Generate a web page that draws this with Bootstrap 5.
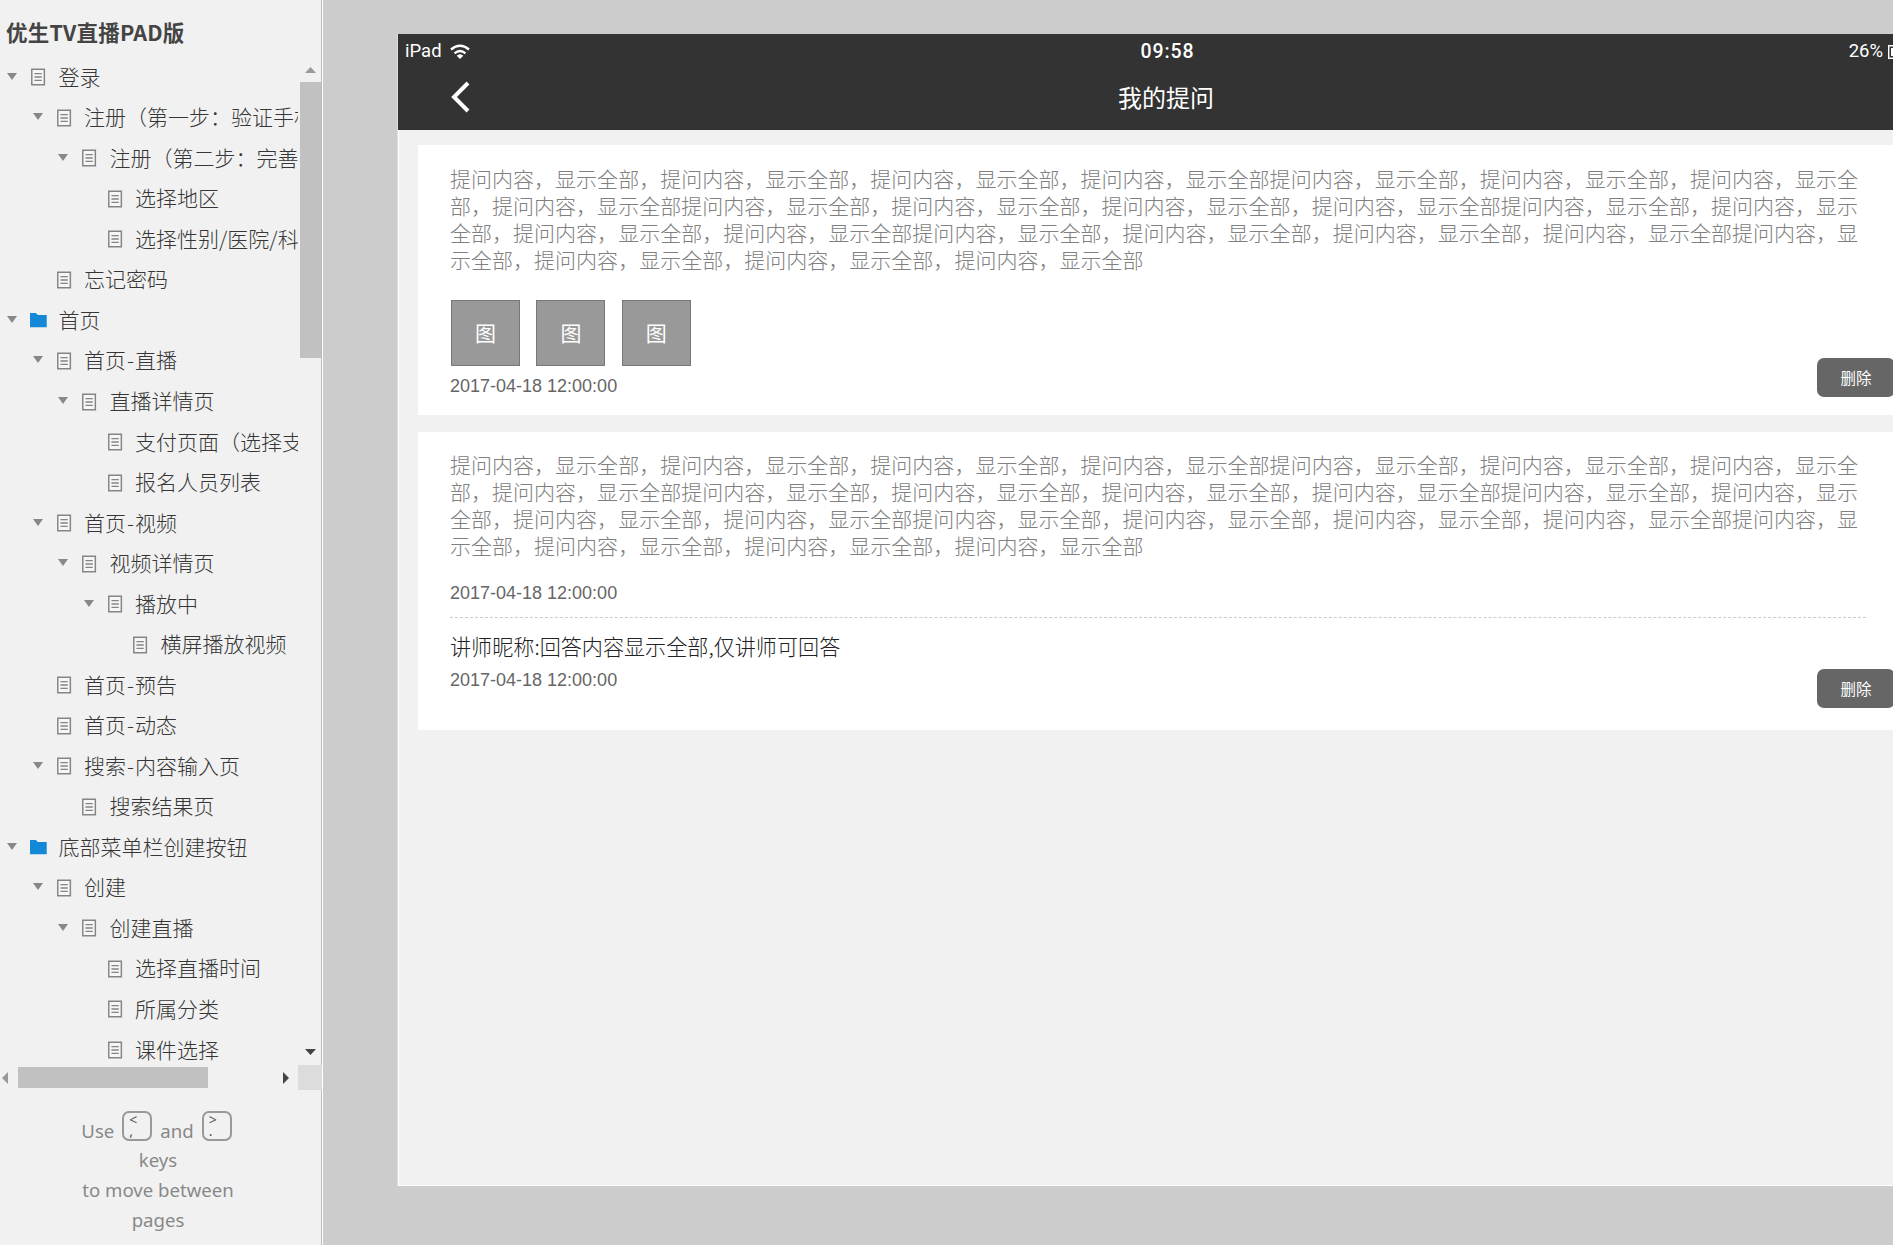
<!DOCTYPE html>
<html lang="zh-CN">
<head>
<meta charset="utf-8">
<title>优生TV直播PAD版</title>
<link rel="stylesheet" href="https://cdn.jsdelivr.net/npm/bootstrap@5.3.0/dist/css/bootstrap.min.css">
<style>
body{background:#ccc;font-family:"Noto Sans CJK SC",sans-serif;color:#444}
symbol{overflow:visible}
.side{width:323px;background:#f1f1f1;border-right:1px solid #fff;box-shadow:inset -1px 0 #bbb}
.site-title{height:57px;padding:2px 0 0 6px;font-size:21.500px;font-weight:700;line-height:60px;letter-spacing:.2px}
.tree-area{height:1008px}
.tree{width:298px;padding:0;color:#363636}
.node{height:40.54px;font-size:21px;font-weight:300;line-height:40px;padding-left:calc(7.1px + var(--lv)*25.5px)}
.node span{margin-top:-3px}
.node b{font-weight:300;margin:0 1px}
.lv0{--lv:0}.lv1{--lv:1}.lv2{--lv:2}.lv3{--lv:3}.lv4{--lv:4}
.arrow{width:24px;flex:none;height:7px;margin-top:-2px}
.arrow.open::before{content:"";display:block;width:0;border:5.500px solid transparent;border-top:7px solid #888;border-bottom:0}
.ic{width:27.500px;height:18px;flex:none;display:block;overflow:visible}
.vbar{width:21px;margin-left:2px;padding-top:10px}
.vthumb{height:276px;background:#c1c1c1;margin-top:9px;width:21px}
.vdown{margin-bottom:10px}
.hbar{height:25px}
.hthumb{width:190px;height:21px;background:#c1c1c1;margin-left:10px}
.corner{width:24px;height:25px;background:#dcdcdc}
.hint{color:#888;font:18.6px/30px "Noto Sans",sans-serif;padding-right:6px;padding-top:18px}
.hint-keys{height:37px;padding-right:3px}
.hint-keys .word{padding-top:8px}
.keycap{width:30px;height:30px;border:2px solid #999;border-radius:7px;color:#555;font:14px/12.500px "Noto Sans",sans-serif;padding:1px 0 0 5px;margin-top:3px}
.keycap .low{margin-top:-2px}
.pad{width:1536px;height:1152px;margin:34px 0 0 75px;background:#f1f1f1;box-shadow:-1px 0 #ddd,inset 1px -1px #fff}
.top{height:96px;background:#333;color:#fff;font-family:Roboto,sans-serif}
.statusbar{height:34px;font-size:18.5px;padding:1px 0 0 7px}
.wifi{margin-left:7px}
.clock{font-weight:500;font-size:19.5px;letter-spacing:.9px}
.titlebar{padding-top:12px}
.page-title{font:400 24px/34px "Noto Sans CJK SC",sans-serif}
.back{margin-left:52px;width:20px}
.cards{margin:14px 0 0 20px;border-top:1px solid transparent}
.q{background:#fff;padding:20px 0 0 32px;width:1510px}
.q1{height:270px;margin-bottom:17px}
.q2{height:298px;padding-top:19px}
.qt{width:1420px;font-size:21.020px;line-height:27px;font-weight:300;color:#808080;margin:0}
.thumbs{padding-left:1px;margin-top:27px;gap:16.400px}
.thumb{width:69px;height:66px;background:#999;border:1px solid #777;color:#fff;font-size:21px;line-height:62px;text-align:center}
.when{font:18px/21px "Liberation Sans",sans-serif;color:#666}
.del{width:78px;height:39px;border-radius:7px;background:#666;color:#fff;font-size:15.500px;line-height:37px;padding:0 0 1px;border:0;display:block;margin-left:1367px}
.rule{border-top:1px dashed #ccc;width:1416px;margin-top:13px}
.ans{font-size:21.100px;font-weight:300;line-height:30px;color:#222;margin-top:13px}
.q1 .when{margin-top:10px}
.q1 .del{margin-top:-39px}
.q2 .first{margin-top:24px}
.q2 .ans+.when{margin-top:9px}
.q2 .del{margin-top:-22px}
</style>
<script src="https://cdn.jsdelivr.net/npm/bootstrap@5.3.0/dist/js/bootstrap.bundle.min.js"></script>
</head>
<body class="vh-100 overflow-hidden">
<svg class="d-none">
<symbol id="doc" viewBox="0 0 28 18"><path d="M.8 1.200h12.800v15.700H.8z" fill="#f6f6f6" stroke="#858585" stroke-width="1.500"/><path d="M3.500 5.500h7.500M3.500 9h7.500M3.500 12.500h7.500" stroke="#858585" stroke-width="1.300"/></symbol>
<symbol id="dir" viewBox="0 0 28 18"><path d="M-1 2h6l2 2h9v12.300H-1z" fill="#1488d8"/></symbol>
</svg>
<div class="d-flex vh-100">
<aside class="side flex-shrink-0 d-flex flex-column">
<div class="site-title text-nowrap">优生TV直播PAD版</div>
<div class="tree-area d-flex overflow-hidden flex-shrink-0">
<div class="tree overflow-hidden text-nowrap" id="tree">
<div class="node lv0 d-flex align-items-center"><i class="arrow open"></i><svg class="ic"><use href="#doc"/></svg><span>登录</span></div>
<div class="node lv1 d-flex align-items-center"><i class="arrow open"></i><svg class="ic"><use href="#doc"/></svg><span>注册（第一步：验证手机）</span></div>
<div class="node lv2 d-flex align-items-center"><i class="arrow open"></i><svg class="ic"><use href="#doc"/></svg><span>注册（第二步：完善</span></div>
<div class="node lv3 d-flex align-items-center"><i class="arrow"></i><svg class="ic"><use href="#doc"/></svg><span>选择地区</span></div>
<div class="node lv3 d-flex align-items-center"><i class="arrow"></i><svg class="ic"><use href="#doc"/></svg><span>选择性别/医院/科</span></div>
<div class="node lv1 d-flex align-items-center"><i class="arrow"></i><svg class="ic"><use href="#doc"/></svg><span>忘记密码</span></div>
<div class="node lv0 d-flex align-items-center"><i class="arrow open"></i><svg class="ic"><use href="#dir"/></svg><span>首页</span></div>
<div class="node lv1 d-flex align-items-center"><i class="arrow open"></i><svg class="ic"><use href="#doc"/></svg><span>首页<b>-</b>直播</span></div>
<div class="node lv2 d-flex align-items-center"><i class="arrow open"></i><svg class="ic"><use href="#doc"/></svg><span>直播详情页</span></div>
<div class="node lv3 d-flex align-items-center"><i class="arrow"></i><svg class="ic"><use href="#doc"/></svg><span>支付页面（选择支</span></div>
<div class="node lv3 d-flex align-items-center"><i class="arrow"></i><svg class="ic"><use href="#doc"/></svg><span>报名人员列表</span></div>
<div class="node lv1 d-flex align-items-center"><i class="arrow open"></i><svg class="ic"><use href="#doc"/></svg><span>首页<b>-</b>视频</span></div>
<div class="node lv2 d-flex align-items-center"><i class="arrow open"></i><svg class="ic"><use href="#doc"/></svg><span>视频详情页</span></div>
<div class="node lv3 d-flex align-items-center"><i class="arrow open"></i><svg class="ic"><use href="#doc"/></svg><span>播放中</span></div>
<div class="node lv4 d-flex align-items-center"><i class="arrow"></i><svg class="ic"><use href="#doc"/></svg><span>横屏播放视频</span></div>
<div class="node lv1 d-flex align-items-center"><i class="arrow"></i><svg class="ic"><use href="#doc"/></svg><span>首页<b>-</b>预告</span></div>
<div class="node lv1 d-flex align-items-center"><i class="arrow"></i><svg class="ic"><use href="#doc"/></svg><span>首页<b>-</b>动态</span></div>
<div class="node lv1 d-flex align-items-center"><i class="arrow open"></i><svg class="ic"><use href="#doc"/></svg><span>搜索<b>-</b>内容输入页</span></div>
<div class="node lv2 d-flex align-items-center"><i class="arrow"></i><svg class="ic"><use href="#doc"/></svg><span>搜索结果页</span></div>
<div class="node lv0 d-flex align-items-center"><i class="arrow open"></i><svg class="ic"><use href="#dir"/></svg><span>底部菜单栏创建按钮</span></div>
<div class="node lv1 d-flex align-items-center"><i class="arrow open"></i><svg class="ic"><use href="#doc"/></svg><span>创建</span></div>
<div class="node lv2 d-flex align-items-center"><i class="arrow open"></i><svg class="ic"><use href="#doc"/></svg><span>创建直播</span></div>
<div class="node lv3 d-flex align-items-center"><i class="arrow"></i><svg class="ic"><use href="#doc"/></svg><span>选择直播时间</span></div>
<div class="node lv3 d-flex align-items-center"><i class="arrow"></i><svg class="ic"><use href="#doc"/></svg><span>所属分类</span></div>
<div class="node lv3 d-flex align-items-center"><i class="arrow"></i><svg class="ic"><use href="#doc"/></svg><span>课件选择</span></div>
</div>
<div class="vbar d-flex flex-column align-items-center">
<svg width="11" height="6"><path d="M0 6 5.500 0 11 6z" fill="#999"/></svg>
<div class="vthumb"></div>
<svg class="mt-auto vdown" width="11" height="6"><path d="M0 0 5.500 6 11 0z" fill="#444"/></svg>
</div>
</div>
<div class="hbar d-flex align-items-center flex-shrink-0">
<svg width="8" height="12"><path d="M8 0v12L2 6z" fill="#999"/></svg>
<div class="hthumb"></div>
<svg class="ms-auto" width="22" height="12"><path d="M7 0v12l6-6z" fill="#444"/></svg>
<div class="corner"></div>
</div>
<div class="hint text-center">
<div class="hint-keys d-flex justify-content-center"><span class="word">Use</span><span class="keycap d-flex flex-column align-items-start ms-2 me-2"><span>&lt;</span><span class="low">,</span></span><span class="word">and</span><span class="keycap d-flex flex-column align-items-start ms-2"><span>&gt;</span><span class="low">.</span></span></div>
<div>keys</div><div>to move between</div><div>pages</div>
</div>
</aside>
<main class="flex-grow-1 overflow-hidden">
<section class="pad">
<header class="top">
<div class="statusbar row g-0 align-items-center">
<div class="col d-flex align-items-center">iPad<svg class="wifi" width="22" height="16" viewBox="0 0 22 16"><g fill="none" stroke="#fff" stroke-width="2.300"><path d="M2 5.500Q11-2 20 5.500M5.500 9.300Q11 4.800 16.500 9.300"/></g><path d="M11 10.200q2 0 3.300 1.500L11 15l-3.300-3.300Q9 10.200 11 10.200z" fill="#fff"/></svg></div>
<div class="col-auto clock">09:58</div>
<div class="col d-flex align-items-center justify-content-end pe-1">26%<svg class="ms-1" width="43" height="14"><path d="M1.700.700h34v12.600h-34z" fill="none" stroke="#fff" stroke-width="1.400"/><path d="M4 3h8v8H4z" fill="#fff"/></svg></div>
</div>
<div class="titlebar row g-0 align-items-center">
<div class="col"><svg class="back d-block" height="32" viewBox="0 0 20 32"><path d="M18 2 4 16l14 14" fill="none" stroke="#fff" stroke-width="4"/></svg></div>
<div class="col-auto page-title">我的提问</div>
<div class="col"></div>
</div>
</header>
<div class="cards">
<article class="q q1">
<p class="qt">提问内容，显示全部，提问内容，显示全部，提问内容，显示全部，提问内容，显示全部提问内容，显示全部，提问内容，显示全部，提问内容，显示全<br>部，提问内容，显示全部提问内容，显示全部，提问内容，显示全部，提问内容，显示全部，提问内容，显示全部提问内容，显示全部，提问内容，显示<br>全部，提问内容，显示全部，提问内容，显示全部提问内容，显示全部，提问内容，显示全部，提问内容，显示全部，提问内容，显示全部提问内容，显<br>示全部，提问内容，显示全部，提问内容，显示全部，提问内容，显示全部</p>
<div class="thumbs d-flex"><div class="thumb">图</div><div class="thumb">图</div><div class="thumb">图</div></div>
<div class="d-flex"><div class="when">2017-04-18 12:00:00</div></div>
<button class="del">删除</button>
</article>
<article class="q q2">
<p class="qt">提问内容，显示全部，提问内容，显示全部，提问内容，显示全部，提问内容，显示全部提问内容，显示全部，提问内容，显示全部，提问内容，显示全<br>部，提问内容，显示全部提问内容，显示全部，提问内容，显示全部，提问内容，显示全部，提问内容，显示全部提问内容，显示全部，提问内容，显示<br>全部，提问内容，显示全部，提问内容，显示全部提问内容，显示全部，提问内容，显示全部，提问内容，显示全部，提问内容，显示全部提问内容，显<br>示全部，提问内容，显示全部，提问内容，显示全部，提问内容，显示全部</p>
<div class="when first">2017-04-18 12:00:00</div>
<div class="rule"></div>
<div class="ans">讲师昵称:回答内容显示全部,仅讲师可回答</div>
<div class="when">2017-04-18 12:00:00</div>
<button class="del">删除</button>
</article>
</div>
</section>
</main>
</div>
</body>
</html>
